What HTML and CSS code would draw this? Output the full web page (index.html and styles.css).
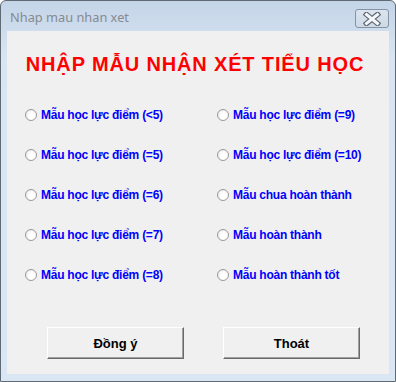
FILE: index.html
```html
<!DOCTYPE html>
<html lang="vi">

<head>
    <meta charset="UTF-8">
    <title>Nhap mau nhan xet</title>
    <link rel="stylesheet" href="styles.css">
</head>

<body>
    <div class="window">
        <div class="titleBar">
            <span class="titleText">Nhap mau nhan xet</span>
            <div class="closeBtn">
                <svg width="18" height="14" viewBox="0 0 18 14">
                    <path d="M3.5 2.5 L14.5 11.5 M14.5 2.5 L3.5 11.5" stroke="#5d6670" stroke-width="5.4" stroke-linecap="square" />
                    <path d="M3.5 2.5 L14.5 11.5 M14.5 2.5 L3.5 11.5" stroke="#f4f6f8" stroke-width="3" stroke-linecap="square" />
                </svg>
            </div>
        </div>
        <div class="client">
            <h1 class="heading">NHẬP MẪU NHẬN XÉT TIỂU HỌC</h1>

            <div class="options">
                <label class="option"><span class="radio"></span>Mẫu học lực điểm (&lt;5)</label>
                <label class="option"><span class="radio"></span>Mẫu học lực điểm (=9)</label>
                <label class="option"><span class="radio"></span>Mẫu học lực điểm (=5)</label>
                <label class="option"><span class="radio"></span>Mẫu học lực điểm (=10)</label>
                <label class="option"><span class="radio"></span>Mẫu học lực điểm (=6)</label>
                <label class="option"><span class="radio"></span>Mẫu chua hoàn thành</label>
                <label class="option"><span class="radio"></span>Mẫu học lực điểm (=7)</label>
                <label class="option"><span class="radio"></span>Mẫu hoàn thành</label>
                <label class="option"><span class="radio"></span>Mẫu học lực điểm (=8)</label>
                <label class="option"><span class="radio"></span>Mẫu hoàn thành tốt</label>
            </div>

            <div class="buttons">
                <button type="button" class="btn">Đồng ý</button>
                <button type="button" class="btn">Thoát</button>
            </div>
        </div>
    </div>
</body>

</html>
```

FILE: styles.css
```css
*,
*::after,
*::before {
    box-sizing: border-box;
}

body {
    margin: 0;
    background-color: #ffffff;
    font-family: 'Liberation Sans', Arial, sans-serif;
}

.window {
    width: 396px;
    height: 382px;
    border: 1px solid #5f6a75;
    border-radius: 6px 6px 0 0;
    background: linear-gradient(#c4d5e8, #d9e5f2 60px, #dae6f3);
    padding: 0 6px 7px 6px;
    display: flex;
    flex-direction: column;
}

.titleBar {
    height: 30px;
    display: flex;
    align-items: flex-start;
    justify-content: space-between;
}

.titleText {
    margin-top: 7px;
    margin-left: 3px;
    font-family: 'Noto Sans', 'Open Sans', sans-serif;
    font-size: 12.8px;
    color: #868a8f;
}

.closeBtn {
    margin-top: 8px;
    width: 34px;
    height: 19px;
    border: 1px solid #8593a3;
    border-radius: 3px;
    background: linear-gradient(#dce5ef, #cdd9e6);
    display: flex;
    align-items: center;
    justify-content: center;
}

.client {
    flex: 1;
    background-color: #f0f0f0;
}

.heading {
    margin: 21px 0 0 0;
    height: 24px;
    line-height: 24px;
    font-size: 20px;
    letter-spacing: 0.85px;
    font-weight: bold;
    color: #ff0000;
    text-align: center;
    padding-right: 6px;
}

.options {
    margin-top: 19px;
    padding-left: 18px;
    display: grid;
    grid-template-columns: 192px 1fr;
    grid-auto-rows: 40px;
}

.option {
    display: flex;
    align-items: center;
    gap: 4px;
    font-size: 12px;
    letter-spacing: -0.25px;
    font-weight: bold;
    color: #0000ff;
}

.radio {
    width: 12px;
    height: 12px;
    border-radius: 50%;
    border: 1px solid #9a9a9a;
    background: radial-gradient(circle at 60% 60%, #ffffff 35%, #e2e2e2 100%);
}

.buttons {
    margin-top: 32px;
    padding-left: 40px;
    display: flex;
    gap: 39px;
}

.btn {
    width: 137px;
    height: 32px;
    border: 1px solid;
    border-color: #ffffff #696969 #696969 #ffffff;
    box-shadow: inset -1px -1px 0 #a0a0a0;
    background-color: #f0f0f0;
    font-family: 'Liberation Sans', Arial, sans-serif;
    font-size: 13px;
    font-weight: bold;
    color: #000000;
    padding: 0;
}
```
